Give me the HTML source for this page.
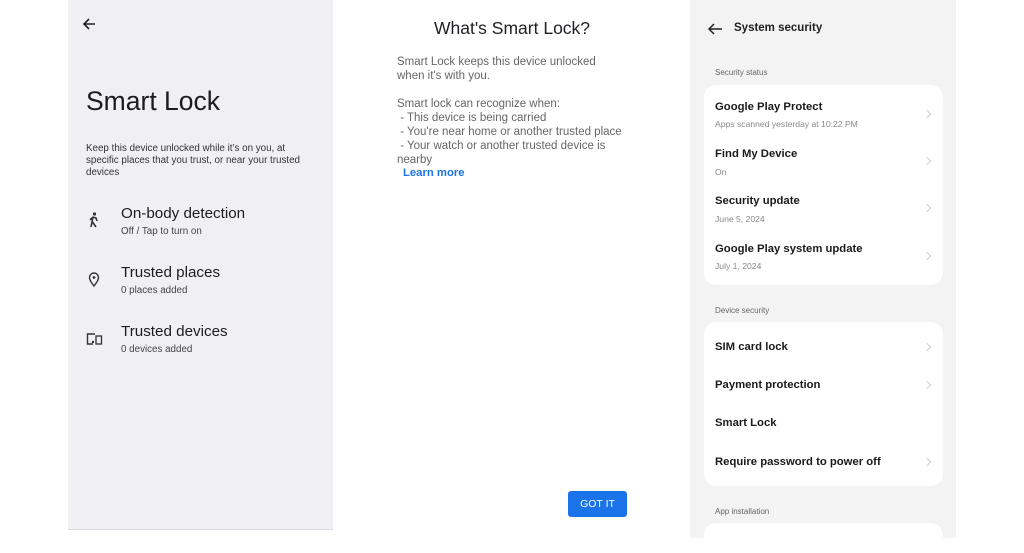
<!DOCTYPE html>
<html><head><meta charset="utf-8"><style>
*{margin:0;padding:0;box-sizing:border-box}
body{width:1024px;height:538px;background:#fff;position:relative;overflow:hidden;font-family:"Liberation Sans",Arial,sans-serif}
.a{position:absolute;white-space:nowrap}
#L{position:absolute;left:68px;top:0;width:265px;height:530px;background:#f0eff4;border-bottom:1px solid #dcdce0}
#R{position:absolute;left:690px;top:0;width:266px;height:538px;background:#f3f3f3}
.card{position:absolute;left:14px;width:239px;background:#fff;border-radius:12px}
.t{font-size:11.3px;color:#1a1a1a;font-weight:bold}
.s{font-size:8.6px;color:#888}
.h{font-size:8px;color:#666}
.chev{position:absolute;right:13px;width:6px;height:6px;border-right:1px solid #d0d0d0;border-top:1px solid #d0d0d0;transform:rotate(45deg)}
</style></head><body>
<div id="L">
<svg class="a" style="left:13px;top:16px" width="16" height="16" viewBox="0 0 16 16"><path d="M14 8H3M8 3L3 8l5 5" stroke="#222" stroke-width="1.6" fill="none"/></svg>
<div class="a" style="left:18px;top:86px;font-size:26.5px;color:#1c1b1f">Smart Lock</div>
<div class="a" style="left:18px;top:143px;font-size:9.8px;color:#333;line-height:12.2px">Keep this device unlocked while it’s on you, at<br>specific places that you trust, or near your trusted<br>devices</div>
<svg class="a" style="left:20px;top:212px" width="12" height="16" viewBox="0 0 12 16"><circle cx="6.5" cy="2" r="1.6" fill="#333"/><path d="M5 5L3 15M5 5l3 1 1 3M5 5L2 8M4.5 10L8 15" stroke="#333" stroke-width="1.6" fill="none"/></svg>
<div class="a" style="left:53px;top:205px;font-size:15.2px;color:#1c1b1f">On-body detection</div>
<div class="a" style="left:53px;top:226px;font-size:9.8px;color:#444">Off / Tap to turn on</div>
<svg class="a" style="left:20px;top:272px" width="12" height="16" viewBox="0 0 12 16"><path d="M6 14C3 10 1.5 8 1.5 5.5a4.5 4.5 0 0 1 9 0C10.5 8 9 10 6 14z" stroke="#333" stroke-width="1.4" fill="none"/><circle cx="6" cy="5.5" r="1.4" fill="#333"/></svg>
<div class="a" style="left:53px;top:264px;font-size:15.2px;color:#1c1b1f">Trusted places</div>
<div class="a" style="left:53px;top:285px;font-size:9.8px;color:#444">0 places added</div>
<svg class="a" style="left:18px;top:332px" width="17" height="13" viewBox="0 0 17 13"><path d="M9 2H1.5v10H7" stroke="#333" stroke-width="1.4" fill="none"/><rect x="10" y="4" width="5.5" height="8" stroke="#333" stroke-width="1.3" fill="none"/><circle cx="7" cy="10" r="1.2" fill="#333"/></svg>
<div class="a" style="left:53px;top:323px;font-size:15.2px;color:#1c1b1f">Trusted devices</div>
<div class="a" style="left:53px;top:344px;font-size:9.8px;color:#444">0 devices added</div>
</div>

<div class="a" style="left:434px;top:18px;font-size:17.5px;color:#202124">What's Smart Lock?</div>
<div class="a" style="left:397px;top:55px;font-size:11.5px;color:#666;line-height:14px">Smart Lock keeps this device unlocked<br>when it's with you.<br><br>Smart lock can recognize when:<br>&nbsp;- This device is being carried<br>&nbsp;- You're near home or another trusted place<br>&nbsp;- Your watch or another trusted device is<br>nearby</div>
<div class="a" style="left:403px;top:167px;font-size:11.3px;color:#1a73e8;font-weight:bold">Learn more</div>
<div class="a" style="left:568px;top:491px;width:59px;height:26px;background:#1a73e8;border-radius:3px;color:#fff;font-size:10.5px;text-align:center;line-height:26px">GOT IT</div>

<div id="R">
<svg class="a" style="left:17px;top:22px" width="16" height="14" viewBox="0 0 16 14"><path d="M15 7H2M7 2L2 7l5 5" stroke="#222" stroke-width="1.5" fill="none"/></svg>
<div class="a" style="left:44px;top:22px;font-size:11.5px;color:#222;font-weight:bold">System security</div>
<div class="a h" style="left:25px;top:68px">Security status</div>
<div class="card" style="top:85px;height:200px">
<div class="a t" style="left:11px;top:16px">Google Play Protect</div><div class="a s" style="left:11px;top:34px">Apps scanned yesterday at 10:22 PM</div><div class="chev" style="top:26px"></div>
<div class="a t" style="left:11px;top:63px">Find My Device</div><div class="a s" style="left:11px;top:82px">On</div><div class="chev" style="top:73px"></div>
<div class="a t" style="left:11px;top:110px">Security update</div><div class="a s" style="left:11px;top:129px">June 5, 2024</div><div class="chev" style="top:120px"></div>
<div class="a t" style="left:11px;top:158px">Google Play system update</div><div class="a s" style="left:11px;top:176px">July 1, 2024</div><div class="chev" style="top:168px"></div>
</div>
<div class="a h" style="left:25px;top:306px">Device security</div>
<div class="card" style="top:322px;height:164px">
<div class="a t" style="left:11px;top:19px">SIM card lock</div><div class="chev" style="top:22px"></div>
<div class="a t" style="left:11px;top:57px">Payment protection</div><div class="chev" style="top:60px"></div>
<div class="a t" style="left:11px;top:95px">Smart Lock</div>
<div class="a t" style="left:11px;top:134px">Require password to power off</div><div class="chev" style="top:137px"></div>
</div>
<div class="a h" style="left:25px;top:507px">App installation</div>
<div class="card" style="top:523px;height:30px"></div>
</div>
</body></html>
